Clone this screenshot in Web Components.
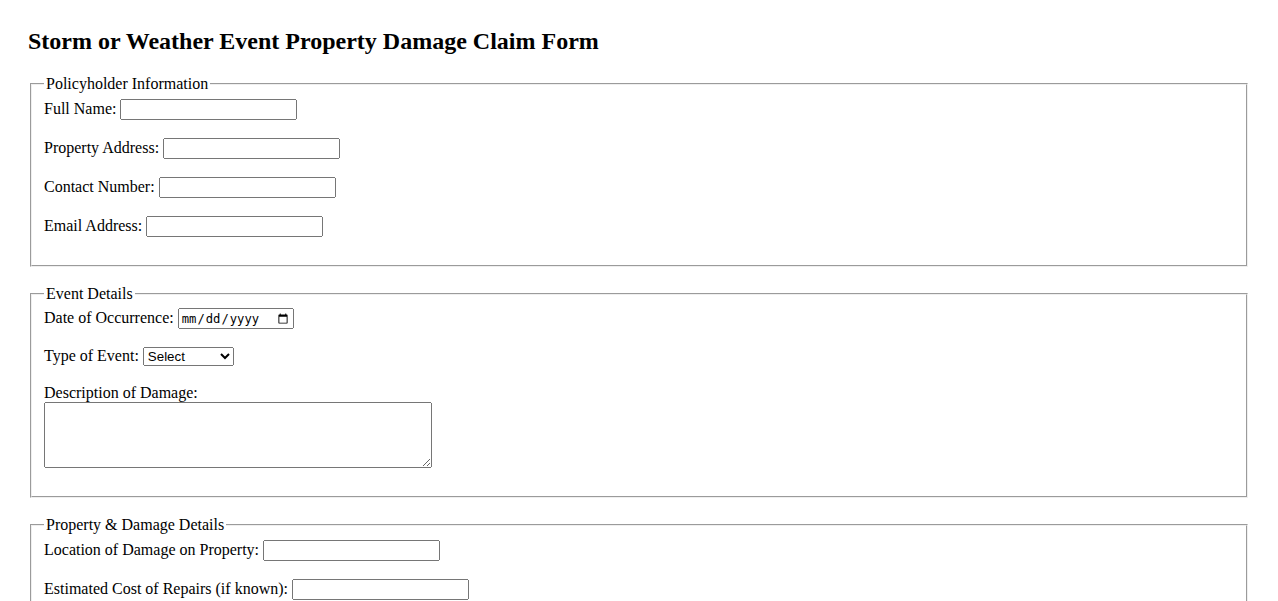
<!DOCTYPE html>
<html lang="en">
<head>
<meta charset="utf-8">
<title>Storm or Weather Event Property Damage Claim Form</title>
<style>
  html {
    height: 100%;
    overflow: hidden;
  }
  body {
    margin: 0;
    height: 100%;
    overflow: hidden;
    background: #fff;
    color: #000;
    font: 16px "Liberation Serif", "Times New Roman", serif;
  }
</style>
</head>
<body>
<claim-form heading="Storm or Weather Event Property Damage Claim Form">
  <form-section legend="Policyholder Information">
    <form-field label="Full Name:"></form-field>
    <form-field label="Property Address:"></form-field>
    <form-field label="Contact Number:"></form-field>
    <form-field label="Email Address:"></form-field>
  </form-section>
  <form-section legend="Event Details">
    <form-field label="Date of Occurrence:" type="date"></form-field>
    <form-field label="Type of Event:" type="select"></form-field>
    <form-field label="Description of Damage:" type="textarea"></form-field>
  </form-section>
  <form-section legend="Property &amp; Damage Details">
    <form-field label="Location of Damage on Property:"></form-field>
    <form-field label="Estimated Cost of Repairs (if known):"></form-field>
  </form-section>
</claim-form>

<script>
class ClaimForm extends HTMLElement {
  constructor() {
    super();
    this.attachShadow({ mode: "open" });
  }

  connectedCallback() {
    this.shadowRoot.innerHTML = /* html */`
      <style>
        :host {
          display: block;
          box-sizing: border-box;
          height: 100%;
          overflow: hidden;
          padding: 28px 28px 0;
        }
        h2 {
          margin: 0 0 20px;
          font-size: 24px;
          line-height: 27px;
        }
      </style>
      <h2>${this.getAttribute("heading")}</h2>
      <slot></slot>
    `;
  }
}

class FormSection extends HTMLElement {
  constructor() {
    super();
    this.attachShadow({ mode: "open" });
  }

  connectedCallback() {
    this.shadowRoot.innerHTML = /* html */`
      <style>
        :host {
          display: block;
          margin-bottom: 18px;
        }
      </style>
      <fieldset>
        <legend></legend>
        <slot></slot>
      </fieldset>
    `;
    this.shadowRoot.querySelector("legend").textContent = this.getAttribute("legend");
  }
}

class FormField extends HTMLElement {
  constructor() {
    super();
    this.attachShadow({ mode: "open" });
  }

  get type() {
    return this.getAttribute("type") || "text";
  }

  getControl() {
    if (this.type === "select") {
      return `<select id="control"><option>Select</option></select>`;
    }
    if (this.type === "textarea") {
      return `<br><textarea id="control" rows="4" cols="50"></textarea>`;
    }
    return `<input id="control" type="${this.type}">`;
  }

  connectedCallback() {
    this.shadowRoot.innerHTML = /* html */`
      <style>
        :host {
          display: block;
          margin-bottom: 18px;
        }
        input, select, textarea {
          box-sizing: border-box;
        }
        input, select {
          font-family: "Liberation Sans", Arial, sans-serif;
          font-size: 13.333px;
        }
        input {
          width: 177px;
          height: 21px;
        }
        input[type="date"] {
          width: 116px;
          font-family: "DejaVu Sans Mono", monospace;
          font-size: 12.2px;
        }
        input::-webkit-calendar-picker-indicator {
          margin-right: 1px;
        }
        select {
          width: 91px;
        }
        textarea {
          width: 388px;
          height: 66px;
          vertical-align: top;
        }
      </style>
      <label for="control">${this.getAttribute("label")}</label>
      ${this.getControl()}
    `;
  }
}

customElements.define("claim-form", ClaimForm);
customElements.define("form-section", FormSection);
customElements.define("form-field", FormField);
</script>
</body>
</html>
